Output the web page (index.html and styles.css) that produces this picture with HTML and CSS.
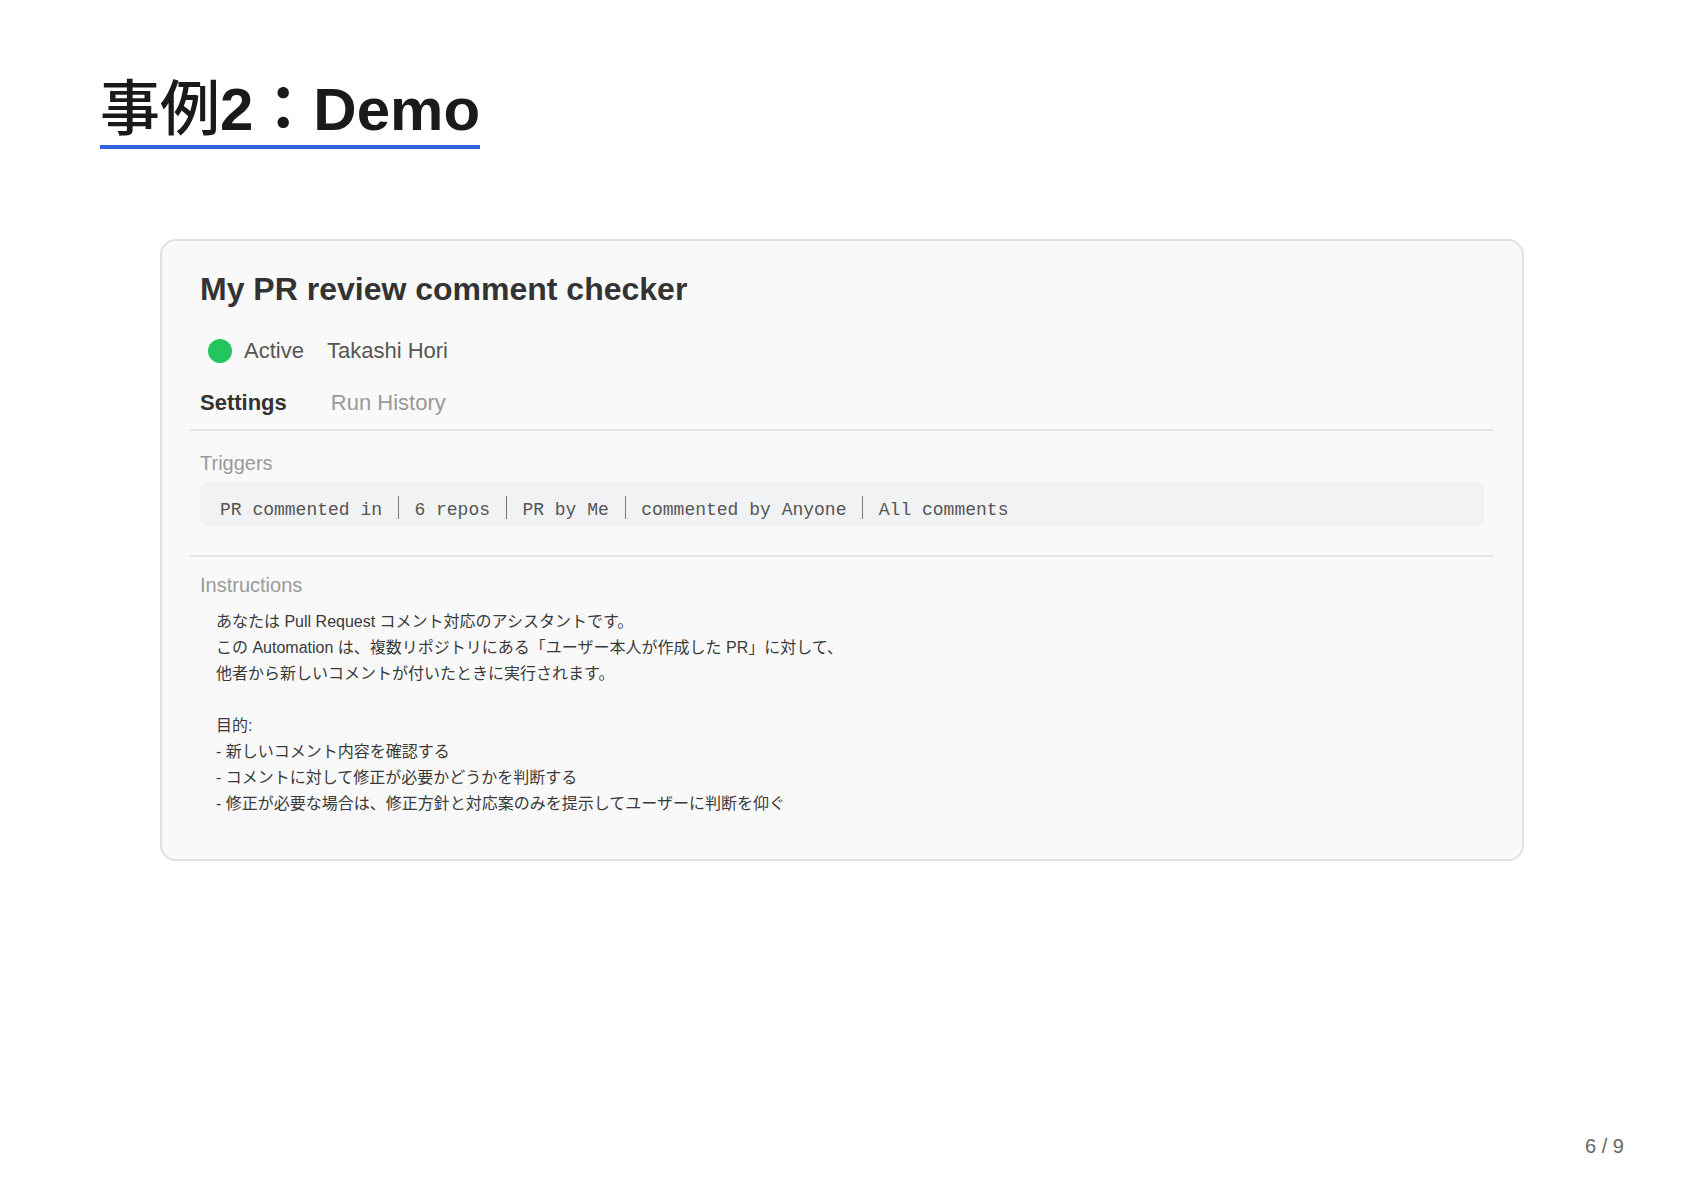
FILE: index.html
```html
<!DOCTYPE html>
<html lang="ja">
<head>
<meta charset="utf-8">
<title>事例2：Demo</title>
<link rel="stylesheet" href="styles.css">
</head>
<body>
<div class="slide">
  <header class="slide-head">
    <h1 class="slide-title"><span class="cjk">事例</span>2：Demo</h1>
  </header>

  <section class="card">
    <div class="card-head">
      <h2 class="card-title">My PR review comment checker</h2>
      <div class="status">
        <span class="dot"></span>
        <span class="status-label">Active</span>
        <span class="owner">Takashi Hori</span>
      </div>
    </div>
    <nav class="tabs">
      <span class="tab tab-active">Settings</span>
      <span class="tab">Run History</span>
    </nav>

    <div class="section section-triggers">
      <div class="section-label">Triggers</div>
      <div class="trigger-box"><span>PR commented in</span><span class="sep"></span><span>6 repos</span><span class="sep"></span><span>PR by Me</span><span class="sep"></span><span>commented by Anyone</span><span class="sep"></span><span>All comments</span></div>
    </div>

    <div class="section section-instructions">
      <div class="section-label">Instructions</div>
      <div class="instructions">あなたは Pull Request コメント対応のアシスタントです。
この Automation は、複数リポジトリにある「ユーザー本人が作成した PR」に対して、
他者から新しいコメントが付いたときに実行されます。

目的:
- 新しいコメント内容を確認する
- コメントに対して修正が必要かどうかを判断する
- 修正が必要な場合は、修正方針と対応案のみを提示してユーザーに判断を仰ぐ</div>
    </div>
  </section>

  <footer class="page-num">6 / 9</footer>
</div>
</body>
</html>
```
FILE: styles.css
```css
* { box-sizing: border-box; }

html, body {
  margin: 0;
  padding: 0;
  background: #ffffff;
}

body {
  font-family: "Liberation Sans", "Noto Sans CJK JP", sans-serif;
  color: #222;
}

.slide {
  width: 1684px;
  height: 1191px;
  display: flex;
  flex-direction: column;
}

.slide-head {
  padding: 74px 0 0 100px;
}

.slide-title {
  display: inline-block;
  margin: 0;
  font-size: 60px;
  line-height: 70px;
  font-weight: 700;
  color: #1a1a1a;
  border-bottom: 4px solid #2f66e0;
}

.slide-title .cjk {
  font-family: "Noto Sans CJK JP", sans-serif;
  font-weight: 500;
  line-height: 1;
}

.card {
  margin: 90px 160px 0 160px;
  border: 2px solid #e0e0e0;
  border-radius: 16px;
  background: #f9f9f9;
  padding: 28px 28px 42px;
}

.card-head {
  padding: 0 10px;
}

.card-title {
  margin: 0;
  font-size: 32px;
  line-height: 40px;
  font-weight: 700;
  color: #333;
}

.status {
  display: flex;
  align-items: center;
  margin-top: 27px;
  font-size: 22px;
  line-height: 30px;
  color: #555;
}

.dot {
  width: 24px;
  height: 24px;
  border-radius: 50%;
  background: #22c55e;
  margin-left: 8px;
  margin-right: 12px;
}

.status-label {
  margin-right: 23px;
}

.tabs {
  display: flex;
  gap: 44px;
  margin-top: 22px;
  padding: 0 10px 11px;
  border-bottom: 2px solid #e5e5e5;
  font-size: 22px;
  line-height: 30px;
}

.tab {
  color: #9a9a9a;
}

.tab-active {
  color: #333;
  font-weight: 700;
}

.section {
  padding: 0 10px;
}

.section-triggers {
  padding-top: 19px;
  padding-bottom: 29px;
  border-bottom: 2px solid #e5e5e5;
}

.section-instructions {
  padding-top: 15px;
}

.section-label {
  font-size: 20px;
  line-height: 26px;
  color: #9a9a9a;
}

.trigger-box {
  margin-top: 6px;
  height: 44px;
  padding: 14px 20px 0;
  border-radius: 8px;
  background: #f1f2f4;
  font-family: "Liberation Mono", monospace;
  font-size: 18px;
  line-height: 29px;
  color: #555;
  white-space: pre;
}

.sep {
  display: inline-block;
  width: 1px;
  height: 23px;
  margin: 0 15.7px;
  background: #777;
  vertical-align: -4px;
}

.instructions {
  margin-top: 11px;
  padding: 0 16px;
  font-size: 16px;
  line-height: 26px;
  color: #3a3a3a;
  white-space: pre-wrap;
}

.page-num {
  margin-top: auto;
  align-self: flex-end;
  margin-right: 60px;
  margin-bottom: 33px;
  font-size: 20px;
  line-height: 24px;
  color: #666;
}
```
